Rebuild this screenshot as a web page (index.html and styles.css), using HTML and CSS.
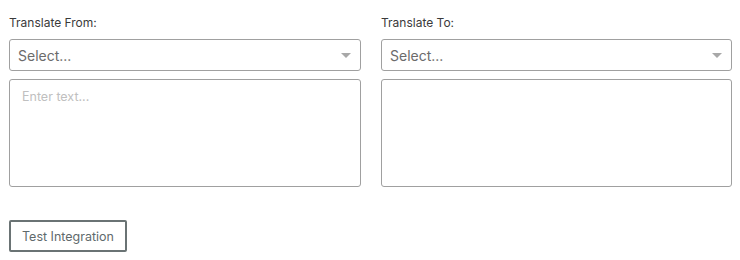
FILE: index.html
```html
<!DOCTYPE html>
<html>
<head>
<meta charset="utf-8">
<link rel="stylesheet" href="styles.css">
</head>
<body>
<div class="form">
  <div class="cols">
    <div class="col">
      <label class="label">Translate From:</label>
      <div class="select"><span>Select...</span><span class="caret"></span></div>
      <div class="textarea"><span class="placeholder">Enter text...</span></div>
    </div>
    <div class="col">
      <label class="label">Translate To:</label>
      <div class="select"><span>Select...</span><span class="caret"></span></div>
      <div class="textarea"></div>
    </div>
  </div>
  <button class="btn">Test Integration</button>
</div>
</body>
</html>
```
FILE: styles.css
```css
html, body { margin: 0; padding: 0; background: #fff; }
body { font-family: "Inter", "Roboto", sans-serif; color: #333; }
.form { padding: 15px 9px 0 9px; }
.cols { display: grid; grid-template-columns: 352px 351px; column-gap: 20px; }
.col { display: flex; flex-direction: column; }
.label { font-size: 12px; color: #3a3a3a; line-height: 16px; margin-bottom: 8px; }
.select {
  height: 32px; box-sizing: border-box; border: 1px solid #a0a0a0; border-radius: 3px;
  display: flex; align-items: center; justify-content: space-between; padding: 0 8px 0 8px;
  font-size: 14px; color: #6b6b6b;
}
.caret { width: 0; height: 0; border-left: 5px solid transparent; border-right: 5px solid transparent; border-top: 5px solid #a8a8a8; margin-right: 1px; }
.textarea {
  margin-top: 8px; height: 108px; box-sizing: border-box; border: 1px solid #a0a0a0; border-radius: 3px;
  padding: 6px 12px; line-height: 18px;
}
.placeholder { font-size: 12.5px; color: #c0c0c0; }
.btn {
  margin-top: 33px; width: 118px; height: 32px; box-sizing: border-box; background: #fff;
  border: 2px solid #6a7374; border-radius: 2px; font-family: inherit; font-size: 12.5px; color: #5f6a6c; padding: 0;
}
```
